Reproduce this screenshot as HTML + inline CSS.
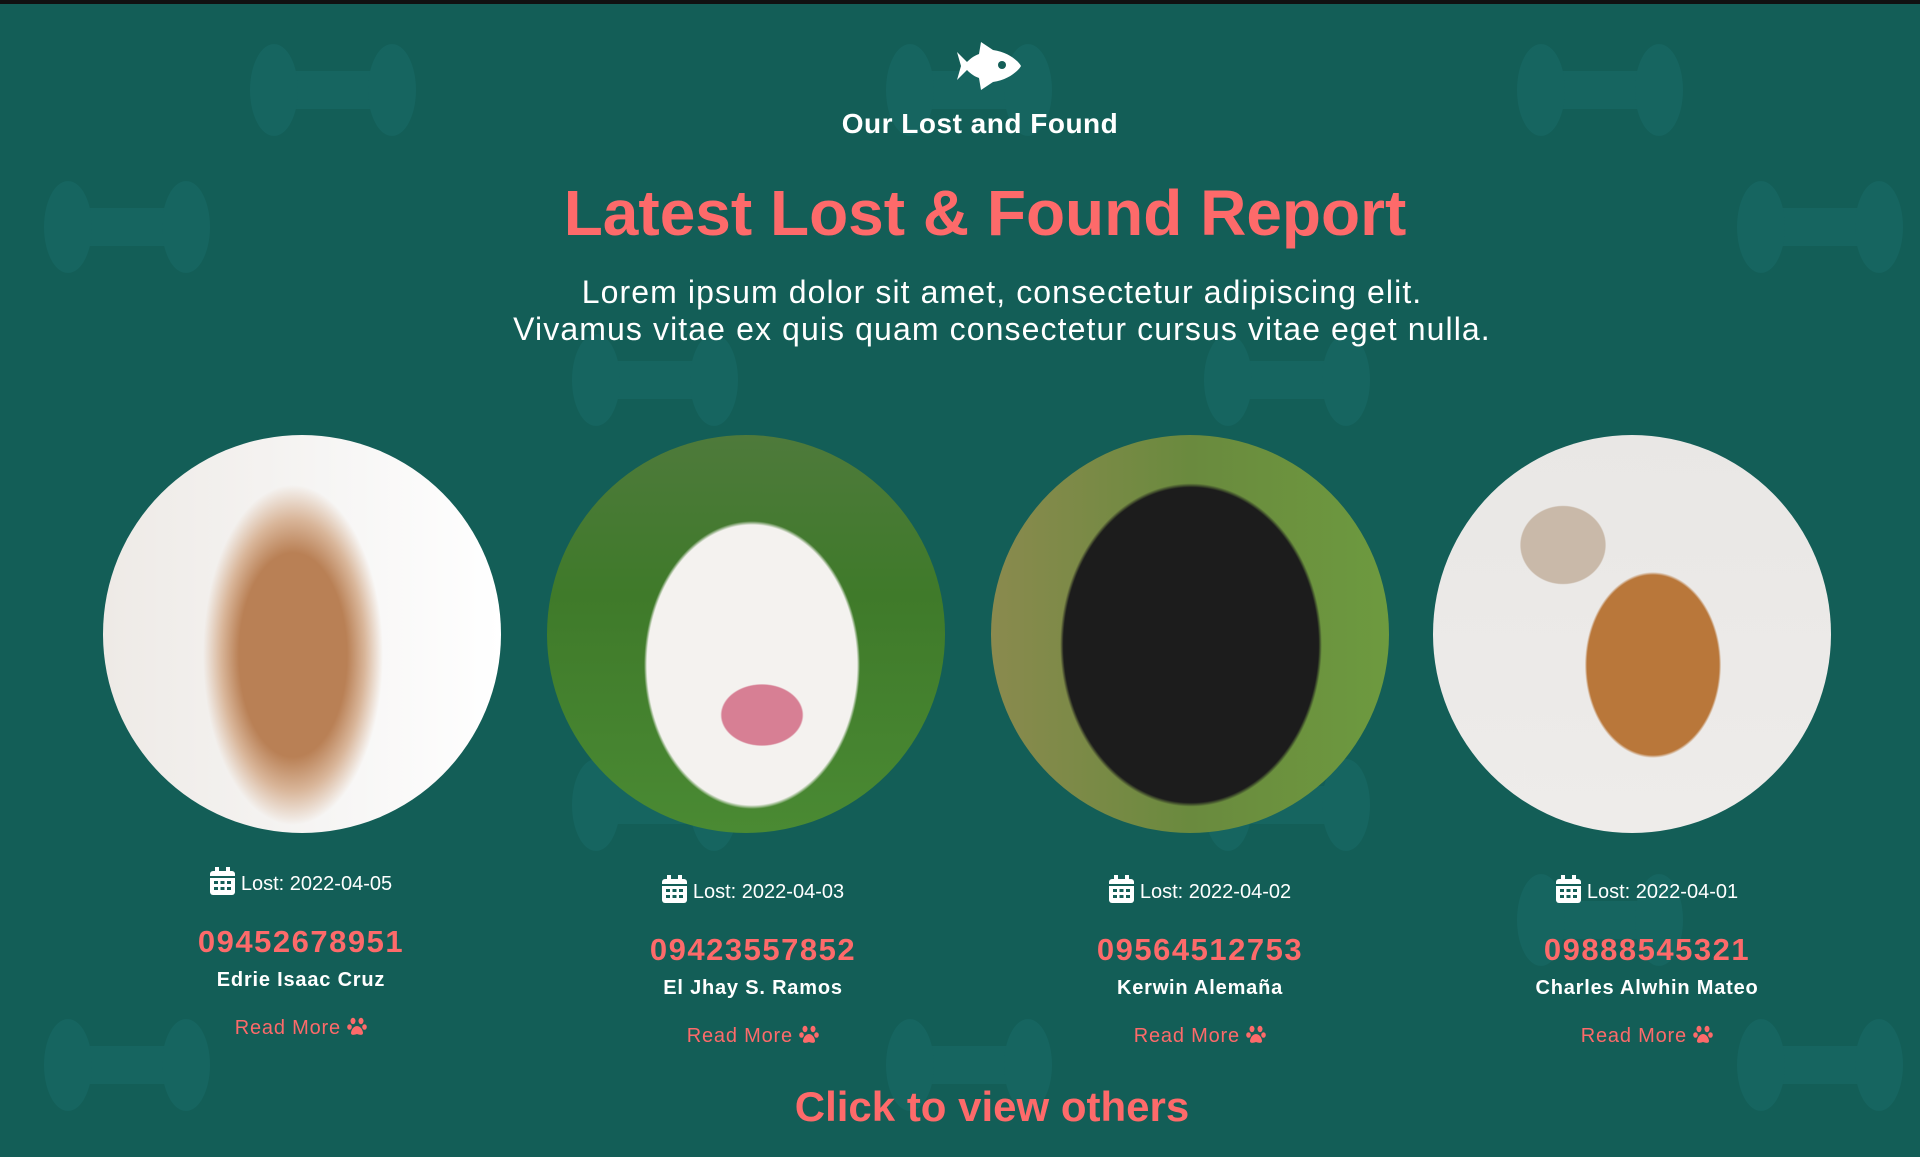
<!DOCTYPE html>
<html><head><meta charset="utf-8"><style>
*{margin:0;padding:0;box-sizing:border-box}
body{width:1920px;height:1157px;background:#135e57;position:relative;overflow:hidden;font-family:"Liberation Sans",sans-serif;color:#fff}
.top{position:absolute;left:0;top:0;width:1920px;height:4px;background:#111}
.c{position:absolute;left:0;width:1920px;text-align:center}
.circ{position:absolute;width:398px;height:398px;border-radius:50%;overflow:hidden;top:435px}
.t{position:absolute;width:446px;text-align:center}
.d{font-size:20px}
.p{font-size:31px;font-weight:bold;color:#fd6a6a;letter-spacing:1.5px;margin-top:28px}
.n{font-size:20px;font-weight:bold;letter-spacing:.8px;margin-top:9px}
.r{font-size:20px;color:#fd6a6a;letter-spacing:.8px;margin-top:24px}
</style></head><body>
<div class="top"></div>
<svg width="1920" height="1157" style="position:absolute;left:0;top:0">
<defs><g id="b" fill="#166560"><rect x="25" y="26" width="120" height="38" rx="6"/><ellipse cx="26" cy="45" rx="24" ry="46"/><ellipse cx="144" cy="45" rx="24" ry="46"/></g></defs>
<use href="#b" x="248" y="45"/><use href="#b" x="42" y="182"/><use href="#b" x="884" y="45"/><use href="#b" x="1515" y="45"/><use href="#b" x="1735" y="182"/><use href="#b" x="570" y="335"/><use href="#b" x="1202" y="335"/><use href="#b" x="42" y="1020"/><use href="#b" x="884" y="1020"/><use href="#b" x="1735" y="1020"/><use href="#b" x="570" y="760"/><use href="#b" x="1202" y="760"/><use href="#b" x="1515" y="875"/>
</svg>
<svg style="position:absolute;left:953px;top:38px" width="70" height="56" viewBox="0 0 70 56"><path d="M26 16 L28 4 L40 12 C56 14 66 24 68 28 C66 32 56 42 40 44 L28 52 L26 40 C20 38 16 34 14 32 L4 42 L8 28 L4 14 L14 24 C16 22 20 18 26 16Z" fill="#fff"/><circle cx="49" cy="27" r="4" fill="#135e57"/></svg>
<div class="c" style="top:108px;left:20px;font-size:28px;font-weight:bold;letter-spacing:.5px">Our Lost and Found</div>
<div class="c" style="top:176px;left:25px;font-size:64px;font-weight:bold;color:#fd6a6a">Latest Lost &amp; Found Report</div>
<div class="c" style="top:274px;left:42px;font-size:32px;line-height:37px;letter-spacing:1.1px">Lorem ipsum dolor sit amet, consectetur adipiscing elit.<br>Vivamus vitae ex quis quam consectetur cursus vitae eget nulla.</div>

<div class="circ" style="left:103px;background:radial-gradient(ellipse 90px 170px at 190px 220px,#b98055 60%,#d9b69a 80%,transparent 100%),linear-gradient(90deg,#eeeae6,#f7f6f5 60%,#fff)"></div>
<div class="circ" style="left:547px;background:radial-gradient(ellipse 80px 60px at 215px 280px,#d77f94 50%,transparent 52%),radial-gradient(ellipse 150px 200px at 205px 230px,#f4f2ef 70%,transparent 72%),linear-gradient(#4e7a3b,#3f7a2a 40%,#4a8a33)"></div>
<div class="circ" style="left:991px;background:radial-gradient(ellipse 170px 210px at 200px 210px,#1c1c1c 75%,transparent 77%),linear-gradient(90deg,#8a8a4e,#6a8a3e 50%,#6d9a3f)"></div>
<div class="circ" style="left:1433px;background:radial-gradient(ellipse 110px 150px at 220px 230px,#b9773a 60%,transparent 62%),radial-gradient(ellipse 60px 55px at 130px 110px,#c9b9a9 70%,transparent 72%),linear-gradient(#e9e7e5,#eeecea)"></div>

<svg width="0" height="0" style="position:absolute"><defs>
<g id="cal"><rect x="0" y="4" width="25" height="24" rx="3" fill="#fff"/><rect x="5" y="0" width="4" height="7" fill="#fff"/><rect x="16" y="0" width="4" height="7" fill="#fff"/><g fill="#135e57"><rect x="0" y="9" width="25" height="2"/><rect x="4" y="14" width="4" height="3"/><rect x="10.5" y="14" width="4" height="3"/><rect x="17" y="14" width="4" height="3"/><rect x="4" y="20" width="4" height="3"/><rect x="10.5" y="20" width="4" height="3"/><rect x="17" y="20" width="4" height="3"/></g></g>
<g id="paw" fill="#fd6a6a"><ellipse cx="6" cy="5" rx="2.5" ry="3.2"/><ellipse cx="14" cy="5" rx="2.5" ry="3.2"/><ellipse cx="2.5" cy="11" rx="2.3" ry="2.8"/><ellipse cx="17.5" cy="11" rx="2.3" ry="2.8"/><path d="M10 10 C6 10 4 15 4 17 C4 19.5 7 19 10 18 C13 19 16 19.5 16 17 C16 15 14 10 10 10Z"/></g>
</defs></svg>

<div class="t" style="left:78px;top:867px">
<div class="d"><svg width="25" height="28" style="vertical-align:-5px;margin-right:6px"><use href="#cal"/></svg>Lost: 2022-04-05</div>
<div class="p">09452678951</div>
<div class="n">Edrie Isaac Cruz</div>
<div class="r">Read More <svg width="20" height="20" style="vertical-align:-2px"><use href="#paw"/></svg></div></div>

<div class="t" style="left:530px;top:875px">
<div class="d"><svg width="25" height="28" style="vertical-align:-5px;margin-right:6px"><use href="#cal"/></svg>Lost: 2022-04-03</div>
<div class="p">09423557852</div>
<div class="n">El Jhay S. Ramos</div>
<div class="r">Read More <svg width="20" height="20" style="vertical-align:-2px"><use href="#paw"/></svg></div></div>

<div class="t" style="left:977px;top:875px">
<div class="d"><svg width="25" height="28" style="vertical-align:-5px;margin-right:6px"><use href="#cal"/></svg>Lost: 2022-04-02</div>
<div class="p">09564512753</div>
<div class="n">Kerwin Alemaña</div>
<div class="r">Read More <svg width="20" height="20" style="vertical-align:-2px"><use href="#paw"/></svg></div></div>

<div class="t" style="left:1424px;top:875px">
<div class="d"><svg width="25" height="28" style="vertical-align:-5px;margin-right:6px"><use href="#cal"/></svg>Lost: 2022-04-01</div>
<div class="p">09888545321</div>
<div class="n">Charles Alwhin Mateo</div>
<div class="r">Read More <svg width="20" height="20" style="vertical-align:-2px"><use href="#paw"/></svg></div></div>

<div class="c" style="top:1083px;left:32px;font-size:42px;font-weight:bold;color:#fd6a6a">Click to view others</div>
</body></html>
